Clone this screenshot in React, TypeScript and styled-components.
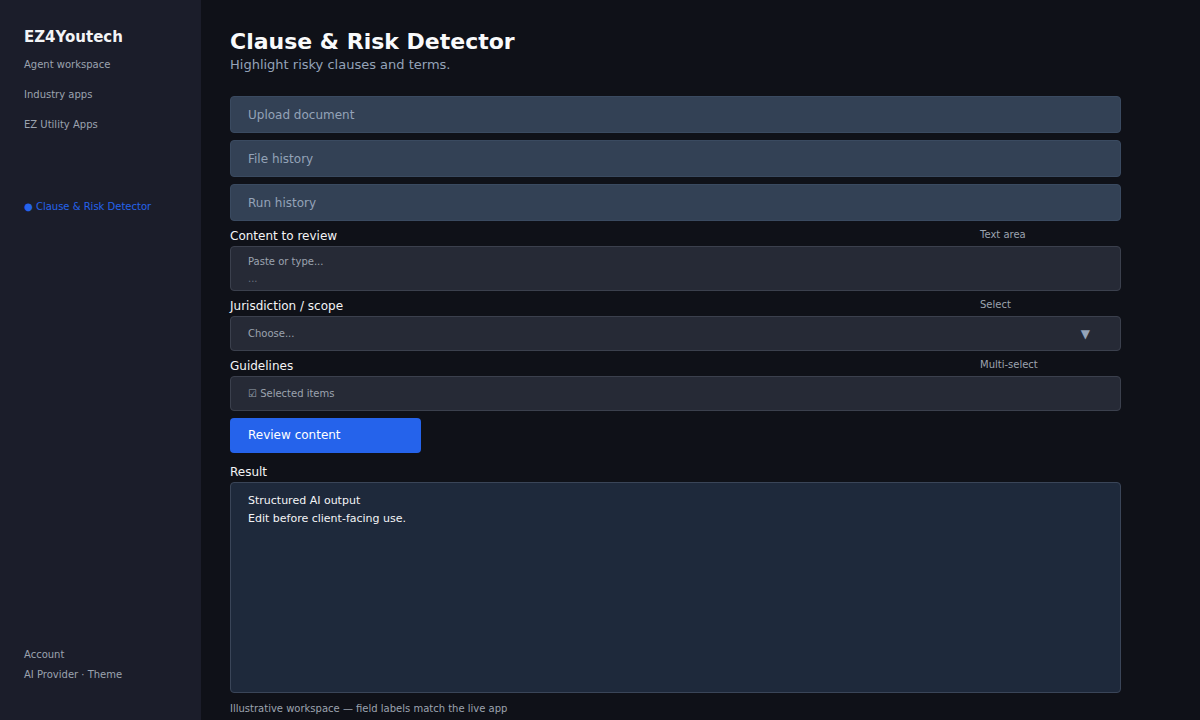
import styled, { createGlobalStyle } from 'styled-components';

const GlobalStyle = createGlobalStyle`
  html, body {
    margin: 0;
    padding: 0;
    background: #0f1118;
  }
  body {
    font-family: 'DejaVu Sans', 'Liberation Sans', sans-serif;
    color: #e5e7eb;
  }
  * {
    box-sizing: border-box;
  }
`;

const navItems = ['Agent workspace', 'Industry apps', 'EZ Utility Apps'];
const panels = ['Upload document', 'File history', 'Run history'];

const App = () => {
  return (
    <>
      <GlobalStyle />
      <Layout>
        <Sidebar>
          <Brand>EZ4Youtech</Brand>
          <NavList>
            {navItems.map((item) => (
              <NavItem key={item}>{item}</NavItem>
            ))}
          </NavList>
          <ActiveItem>● Clause &amp; Risk Detector</ActiveItem>
          <SidebarFooter>
            <NavItem>Account</NavItem>
            <NavItem>AI Provider · Theme</NavItem>
          </SidebarFooter>
        </Sidebar>
        <Main>
          <Title>Clause &amp; Risk Detector</Title>
          <Subtitle>Highlight risky clauses and terms.</Subtitle>
          <Form>
            {panels.map((p) => (
              <Panel key={p}>{p}</Panel>
            ))}
            <Field>
              <LabelRow>
                <Label>Content to review</Label>
                <Hint>Text area</Hint>
              </LabelRow>
              <TextBox>
                <Placeholder>Paste or type...</Placeholder>
                <Placeholder $dim>...</Placeholder>
              </TextBox>
            </Field>
            <Field>
              <LabelRow>
                <Label>Jurisdiction / scope</Label>
                <Hint>Select</Hint>
              </LabelRow>
              <SelectBox>
                <Placeholder>Choose...</Placeholder>
                <Caret>▼</Caret>
              </SelectBox>
            </Field>
            <Field>
              <LabelRow>
                <Label>Guidelines</Label>
                <Hint>Multi-select</Hint>
              </LabelRow>
              <SelectBox>
                <Placeholder>☑ Selected items</Placeholder>
              </SelectBox>
            </Field>
            <PrimaryButton>Review content</PrimaryButton>
            <ResultField>
              <Label>Result</Label>
              <ResultBox>
                <ResultLine>Structured AI output</ResultLine>
                <ResultLine>Edit before client-facing use.</ResultLine>
              </ResultBox>
            </ResultField>
            <Footnote>Illustrative workspace — field labels match the live app</Footnote>
          </Form>
        </Main>
      </Layout>
    </>
  );
};

const Layout = styled.div`
  display: flex;
  width: 1200px;
  height: 720px;
  overflow: hidden;
`;

const Sidebar = styled.aside`
  width: 201px;
  flex-shrink: 0;
  background: #1b1d2a;
  padding: 28px 24px 39px;
  display: flex;
  flex-direction: column;
`;

const Brand = styled.div`
  font-size: 15px;
  font-weight: bold;
  color: #f3f4f6;
  line-height: 18px;
  margin-bottom: 12px;
`;

const NavList = styled.div`
  display: flex;
  flex-direction: column;
  gap: 17px;
`;

const NavItem = styled.div`
  font-size: 10px;
  line-height: 13px;
  color: #9ca3af;
`;

const ActiveItem = styled(NavItem)`
  color: #2563eb;
  margin-top: 69px;
`;

const SidebarFooter = styled.div`
  margin-top: auto;
  display: flex;
  flex-direction: column;
  gap: 7px;
`;

const Main = styled.main`
  flex: 1;
  padding: 29px 29px 0;
`;

const Title = styled.h1`
  margin: 0;
  font-size: 22px;
  line-height: 26px;
  font-weight: bold;
  color: #f9fafb;
`;

const Subtitle = styled.p`
  margin: 1px 0 22px;
  font-size: 13px;
  line-height: 18px;
  color: #94a3b8;
`;

const Form = styled.div`
  width: 891px;
  display: flex;
  flex-direction: column;
  gap: 7px;
`;

const Panel = styled.div`
  height: 37px;
  display: flex;
  align-items: center;
  padding: 0 17px;
  background: #334155;
  border: 1px solid #3a4a60;
  border-radius: 4px;
  font-size: 12px;
  color: #94a3b8;
`;

const Field = styled.div`
  display: flex;
  flex-direction: column;
  gap: 3px;
`;

const LabelRow = styled.div`
  display: flex;
  justify-content: space-between;
  align-items: flex-end;
  height: 15px;
`;

const Label = styled.div`
  font-size: 12px;
  line-height: 14px;
  color: #f3f4f6;
`;

const Hint = styled.div`
  width: 141px;
  font-size: 10px;
  line-height: 12px;
  color: #9ca3af;
  margin-bottom: 2px;
`;

const inputBase = `
  background: #262a36;
  border: 1px solid #3b404d;
  border-radius: 4px;
  padding: 0 17px;
`;

const TextBox = styled.div`
  ${inputBase}
  height: 45px;
  padding-top: 8px;
  display: flex;
  flex-direction: column;
  gap: 4px;
`;

const SelectBox = styled.div`
  ${inputBase}
  height: 35px;
  display: flex;
  align-items: center;
  justify-content: space-between;
`;

const Placeholder = styled.div<{ $dim?: boolean }>`
  font-size: 10px;
  line-height: 13px;
  color: ${(p) => (p.$dim ? '#6b7280' : '#9ca3af')};
`;

const Caret = styled.span`
  font-size: 12px;
  color: #94a3b8;
  margin-right: 13px;
`;

const PrimaryButton = styled.button`
  width: 191px;
  height: 35px;
  border: none;
  border-radius: 4px;
  background: #2563eb;
  color: #ffffff;
  font-family: inherit;
  font-size: 12px;
  text-align: left;
  padding: 0 18px 2px;
  cursor: pointer;
`;

const ResultField = styled(Field)`
  margin-top: 5px;
`;

const ResultBox = styled.div`
  height: 211px;
  background: #1e293b;
  border: 1px solid #3a4558;
  border-radius: 4px;
  padding: 11px 17px;
  display: flex;
  flex-direction: column;
  gap: 5px;
`;

const ResultLine = styled.div`
  font-size: 11px;
  line-height: 13px;
  color: #f3f4f6;
`;

const Footnote = styled.div`
  margin-top: 3px;
  font-size: 10px;
  line-height: 12px;
  color: #9ca3af;
`;

export default App;
